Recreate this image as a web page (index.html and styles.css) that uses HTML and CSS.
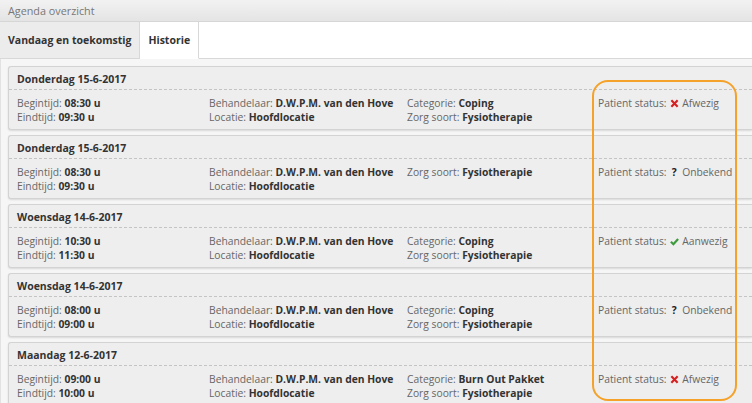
FILE: index.html
```html
<html>
<head>
  <meta charset="utf-8">
  <title>Agenda overzicht</title>
  <link rel="stylesheet" href="styles.css">
</head>
<body>
  <div class="panel">
    <div class="panel-heading">Agenda overzicht</div>

    <div class="tabs">
      <span class="tab">Vandaag en toekomstig</span>
      <span class="tab active">Historie</span>
      <span class="tab-rest"></span>
    </div>

    <div class="appointments">
      <div class="appointment">
        <div class="appointment-title">Donderdag 15-6-2017</div>
        <div class="appointment-body">
          <div>Begintijd: <b>08:30 u</b></div>
          <div>Behandelaar: <b>D.W.P.M. van den Hove</b></div>
          <div>Categorie: <b>Coping</b></div>
          <div>Patient status: <span class="status-icon absent"><svg viewBox="0 0 10 10"><path d="M1.5 1.5 L8.5 8.5 M8.5 1.5 L1.5 8.5"/></svg></span>Afwezig</div>
          <div>Eindtijd: <b>09:30 u</b></div>
          <div>Locatie: <b>Hoofdlocatie</b></div>
          <div>Zorg soort: <b>Fysiotherapie</b></div>
          <div></div>
        </div>
      </div>

      <div class="appointment">
        <div class="appointment-title">Donderdag 15-6-2017</div>
        <div class="appointment-body">
          <div>Begintijd: <b>08:30 u</b></div>
          <div>Behandelaar: <b>D.W.P.M. van den Hove</b></div>
          <div>Zorg soort: <b>Fysiotherapie</b></div>
          <div>Patient status: <span class="status-icon unknown">?</span>Onbekend</div>
          <div>Eindtijd: <b>09:30 u</b></div>
          <div>Locatie: <b>Hoofdlocatie</b></div>
          <div></div>
          <div></div>
        </div>
      </div>

      <div class="appointment">
        <div class="appointment-title">Woensdag 14-6-2017</div>
        <div class="appointment-body">
          <div>Begintijd: <b>10:30 u</b></div>
          <div>Behandelaar: <b>D.W.P.M. van den Hove</b></div>
          <div>Categorie: <b>Coping</b></div>
          <div>Patient status: <span class="status-icon present"><svg viewBox="0 0 10 10"><path d="M1 5.2 L3.8 8 L9 2.2"/></svg></span>Aanwezig</div>
          <div>Eindtijd: <b>11:30 u</b></div>
          <div>Locatie: <b>Hoofdlocatie</b></div>
          <div>Zorg soort: <b>Fysiotherapie</b></div>
          <div></div>
        </div>
      </div>

      <div class="appointment">
        <div class="appointment-title">Woensdag 14-6-2017</div>
        <div class="appointment-body">
          <div>Begintijd: <b>08:00 u</b></div>
          <div>Behandelaar: <b>D.W.P.M. van den Hove</b></div>
          <div>Categorie: <b>Coping</b></div>
          <div>Patient status: <span class="status-icon unknown">?</span>Onbekend</div>
          <div>Eindtijd: <b>09:00 u</b></div>
          <div>Locatie: <b>Hoofdlocatie</b></div>
          <div>Zorg soort: <b>Fysiotherapie</b></div>
          <div></div>
        </div>
      </div>

      <div class="appointment">
        <div class="appointment-title">Maandag 12-6-2017</div>
        <div class="appointment-body">
          <div>Begintijd: <b>09:00 u</b></div>
          <div>Behandelaar: <b>D.W.P.M. van den Hove</b></div>
          <div>Categorie: <b>Burn Out Pakket</b></div>
          <div>Patient status: <span class="status-icon absent"><svg viewBox="0 0 10 10"><path d="M1.5 1.5 L8.5 8.5 M8.5 1.5 L1.5 8.5"/></svg></span>Afwezig</div>
          <div>Eindtijd: <b>10:00 u</b></div>
          <div>Locatie: <b>Hoofdlocatie</b></div>
          <div>Zorg soort: <b>Fysiotherapie</b></div>
          <div></div>
        </div>
      </div>
    </div>

    <!-- highlight round the status column -->
    <div class="highlight"></div>
  </div>
</body>
</html>
```

FILE: styles.css
```css
body {
  margin: 0;
  font-family: "Open Sans", "DejaVu Sans", sans-serif;
  font-size: 10.3px;
  color: #666;
  background: #fff;
  overflow: hidden;
}
.panel {
  position: relative;
  height: 403px;
  overflow: hidden;
}
.panel-heading {
  height: 21px;
  line-height: 21px;
  padding-left: 8px;
  font-size: 10.8px;
  color: #777;
  background: linear-gradient(#f2f2f2, #e4e4e4);
  border-bottom: 1px solid #d6d6d6;
}
.tabs {
  display: flex;
  height: 37px;
}
.tab {
  padding: 0 8px;
  line-height: 37px;
  font-size: 10.5px;
  font-weight: 700;
  color: #333;
  background: #ececec;
  border-right: 1px solid #d8d8d8;
  border-bottom: 1px solid #d8d8d8;
}
.tab.active {
  background: #fff;
  border-bottom-color: #fff;
}
.tab-rest {
  flex: 1;
  background: #fff;
  border-bottom: 1px solid #d8d8d8;
}
.appointments {
  display: flex;
  flex-direction: column;
  gap: 5px;
  padding: 7px 0 0 7px;
  background: #f6f6f6;
  border-left: 1px solid #e2e2e2;
  height: 400px;
}
.appointment {
  background: #eeeeee;
  border: 1px solid #d3d3d3;
  border-right: none;
  border-radius: 3px 0 0 3px;
  box-shadow: 0 1px 2px rgba(0, 0, 0, 0.12);
}
.appointment-title {
  padding: 4px 8px 2px;
  line-height: 16px;
  font-size: 10.5px;
  font-weight: 700;
  color: #333;
  border-bottom: 1px dashed #c4c4c4;
}
.appointment-body {
  display: grid;
  grid-template-columns: 192px 198px 191px auto;
  padding: 6px 8px 5px;
  line-height: 14px;
  white-space: nowrap;
}
.appointment-body b {
  color: #333;
}
.status-icon {
  display: inline-block;
  width: 10px;
  margin-right: 3px;
  text-align: center;
}
.status-icon svg {
  width: 9px;
  height: 9px;
  fill: none;
  stroke-width: 2.4;
  vertical-align: -1px;
}
.status-icon.absent svg {
  stroke: #d62020;
}
.status-icon.present svg {
  stroke: #3d9a3d;
}
.status-icon.unknown {
  font-weight: 700;
  color: #222;
}
.highlight {
  position: absolute;
  left: 592px;
  top: 80px;
  width: 141px;
  height: 317px;
  border: 2px solid #f5a22a;
  border-radius: 16px;
}
```
